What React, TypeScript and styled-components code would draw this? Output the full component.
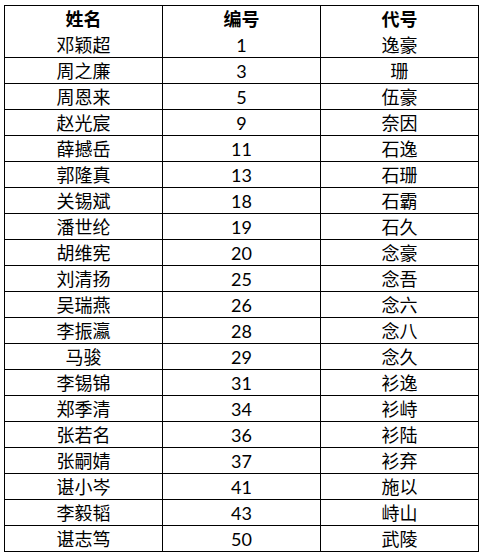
import React from "react";
import styled, { createGlobalStyle } from "styled-components";

const rows: [string, string, string][] = [
  ["邓颖超", "1", "逸豪"],
  ["周之廉", "3", "珊"],
  ["周恩来", "5", "伍豪"],
  ["赵光宸", "9", "奈因"],
  ["薛撼岳", "11", "石逸"],
  ["郭隆真", "13", "石珊"],
  ["关锡斌", "18", "石霸"],
  ["潘世纶", "19", "石久"],
  ["胡维宪", "20", "念豪"],
  ["刘清扬", "25", "念吾"],
  ["吴瑞燕", "26", "念六"],
  ["李振瀛", "28", "念八"],
  ["马骏", "29", "念久"],
  ["李锡锦", "31", "衫逸"],
  ["郑季清", "34", "衫峙"],
  ["张若名", "36", "衫陆"],
  ["张嗣婧", "37", "衫弃"],
  ["谌小岑", "41", "施以"],
  ["李毅韬", "43", "峙山"],
  ["谌志笃", "50", "武陵"],
];

const GlobalStyle = createGlobalStyle`
  body {
    margin: 0;
    background: #fff;
    font-family: Lato, "Noto Sans CJK SC", sans-serif;
  }
`;

const Page = styled.div`
  padding: 5px 0 0 4px;
`;

const Sheet = styled.div`
  display: grid;
  grid-template-columns: repeat(3, 157px);
  grid-auto-rows: 25px;
  gap: 1px;
  padding: 1px;
  width: max-content;
  background: #000;
`;

const Cell = styled.div<{ $head?: boolean }>`
  display: flex;
  align-items: center;
  justify-content: center;
  background: #fff;
  color: #000;
  font-size: 18px;
  font-weight: ${(p) => (p.$head ? 700 : 400)};
  height: ${(p) => (p.$head ? "26px" : "25px")};
  line-height: 1;
`;

export default function App() {
  return (
    <>
      <GlobalStyle />
      <Page>
        <Sheet>
          <Cell $head>姓名</Cell>
          <Cell $head>编号</Cell>
          <Cell $head>代号</Cell>
          {rows.map(([name, num, code]) => (
            <React.Fragment key={num}>
              <Cell>{name}</Cell>
              <Cell>{num}</Cell>
              <Cell>{code}</Cell>
            </React.Fragment>
          ))}
        </Sheet>
      </Page>
    </>
  );
}
